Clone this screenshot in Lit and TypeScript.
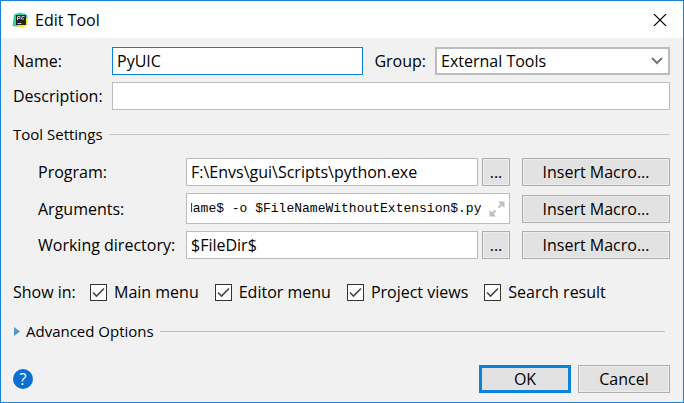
import { LitElement, html, css } from "lit";
import { customElement, query } from "lit/decorators.js";

interface SettingRow {
  id: string;
  label: string;
  value: string;
  browse: boolean;
}

const SETTINGS: SettingRow[] = [
  { id: "program", label: "Program:", value: "F:\\Envs\\gui\\Scripts\\python.exe", browse: true },
  { id: "arguments", label: "Arguments:", value: "$FileName$ -o $FileNameWithoutExtension$.py", browse: false },
  { id: "directory", label: "Working directory:", value: "$FileDir$", browse: true },
];

const PLACES = ["Main menu", "Editor menu", "Project views", "Search result"];

@customElement("app-root")
export class AppRoot extends LitElement {
  static styles = css`
    :host {
      display: block;
      min-height: 100vh;
      box-sizing: border-box;
      border: 1px solid #1883d7;
      background: #f1f1f1;
      color: #000;
      font: 16px/20px "Open Sans", "Noto Sans", sans-serif;
    }
    * { box-sizing: border-box; }
    input, select, button { font: inherit; color: inherit; margin: 0; border-radius: 0; }
    .titlebar {
      display: flex;
      align-items: center;
      height: 37px;
      padding: 0 14px 0 11px;
      background: #fff;
    }
    .logo { width: 18px; height: 18px; margin-right: 5px; }
    h1 { flex: 1; margin: 0; font: inherit; }
    .close { display: flex; padding: 2px; border: 0; background: none; }
    .body { padding: 9px 13px 8px 12px; }
    .row { display: flex; align-items: center; }
    .identity { display: grid; grid-template-columns: 99px 1fr; row-gap: 7px; align-items: center; }
    .field {
      width: 100%;
      min-width: 0;
      height: 28px;
      padding: 0 4px;
      border: 1px solid #bcbcbc;
      outline: 0;
      background: #fff;
    }
    .focused { flex: 1; border-color: #0a84d9; }
    .group-label { padding: 0 9px 0 11px; }
    .select { position: relative; flex: 0 0 235px; display: flex; }
    select {
      width: 100%;
      height: 28px;
      padding: 0 24px 0 4px;
      border: 2px solid #bcbcbc;
      outline: 0;
      appearance: none;
      background: #fff;
    }
    .chevron { position: absolute; right: 7px; top: 10px; pointer-events: none; }
    .section { display: flex; align-items: center; gap: 6px; margin-top: 14px; }
    .section h2 { margin: 0; font: inherit; font-size: 15px; }
    .rule { flex: 1; height: 1px; background: #c6c6c6; }
    .settings {
      display: grid;
      grid-template-columns: 148px 1fr 148px;
      row-gap: 7px;
      align-items: center;
      margin: 14px 0 0 25px;
    }
    .control { display: flex; gap: 4px; margin-right: 12px; min-width: 0; }
    .button {
      height: 28px;
      padding: 0;
      border: 1px solid #adadad;
      background: #e2e2e2;
      box-shadow: inset 0 0 0 1px #ececec;
      text-align: center;
    }
    .browse { flex: 0 0 28px; }
    .expandable {
      display: flex;
      align-items: center;
      flex: 1;
      min-width: 0;
      height: 31px;
      padding: 0 4px;
      border: 1px solid #bcbcbc;
      background: #fff;
    }
    .code {
      flex: 1;
      min-width: 0;
      height: 28px;
      padding: 0;
      border: 0;
      outline: 0;
      background: none;
      font: 13px "Liberation Mono", monospace;
    }
    .expand { display: flex; margin-left: 8px; padding: 0; border: 0; background: none; }
    .places { display: flex; align-items: center; margin-top: 23px; white-space: nowrap; }
    .places-label { width: 77px; }
    .place { display: flex; align-items: center; margin-right: 16px; }
    .tick {
      appearance: none;
      width: 17px;
      height: 17px;
      margin-right: 7px;
      border: 1px solid #333;
      background: #fff;
    }
    .box { position: relative; display: flex; }
    .check { position: absolute; pointer-events: none; }
    .advanced { display: flex; align-items: center; margin: 19px 5px 0 0; }
    .toggle { display: flex; align-items: center; gap: 6px; padding: 0; border: 0; background: none; font-size: 15px; }
    .advanced .rule { margin-left: 6px; background: #bbb; }
    .footer { display: flex; align-items: center; gap: 7px; margin-top: 24px; }
    .help {
      width: 20px;
      height: 20px;
      margin-right: auto;
      padding: 0;
      border: 0;
      border-radius: 50%;
      background: #0a6fd0;
      color: #fff;
    }
    .footer .button { width: 92px; }
    .footer .primary { border: 3px solid #0a84d9; box-shadow: none; }
  `;

  @query(".code") private code!: HTMLInputElement;

  firstUpdated() {
    this.code.scrollLeft = this.code.scrollWidth;
  }

  private renderControl(row: SettingRow) {
    if (row.browse) {
      return html`
        <input class="field" id=${row.id} .value=${row.value} />
        <button class="button browse" aria-label="Browse">...</button>`;
    }
    return html`
      <div class="expandable">
        <input class="code" id=${row.id} .value=${row.value} />
        <button class="expand" aria-label="Expand">
          <svg width="16" height="16" viewBox="0 0 16 16" fill="#b9bfc4" stroke="#b9bfc4" stroke-width="2">
            <path stroke="none" d="M9 0.5h6.5v6.500zM0.500 9v6.500h6.500z" />
            <path d="M13.500 2.500l-4 4M2.500 13.500l4-4" />
          </svg>
        </button>
      </div>`;
  }

  render() {
    return html`
      <header class="titlebar">
        <svg class="logo" viewBox="0 0 18 18" aria-hidden="true">
          <path fill="#2fd596" d="M2 3.500L8 1.500l4 1.500-2 12-5 .5-4.500-.5z" />
          <path fill="#2bc5dc" d="M11.500 2l3 1.500L16 7l-4 1z" />
          <path fill="#f3ea4e" d="M13.500 6l2.500 1v7l-5 3-6-1.500 1-2.500z" />
          <path fill="#242424" d="M4 4h10v10H4z" />
          <path stroke="#c8c8c8" fill="none" d="M5.500 9V5.500h2.500V7.500H6M12.500 5.500H10L9.500 8H12M5.500 12.500h4" />
        </svg>
        <h1>Edit Tool</h1>
        <button class="close" aria-label="Close">
          <svg width="14" height="12" viewBox="0 0 14 12" stroke="#000" stroke-width="1.1">
            <path d="M1 0l12 12M13 0L1 12" />
          </svg>
        </button>
      </header>
      <main class="body">
        <div class="identity">
          <label for="name">Name:</label>
          <div class="row">
            <input class="field focused" id="name" .value=${"PyUIC"} />
            <label class="group-label" for="group">Group:</label>
            <div class="select">
              <select id="group"><option>External Tools</option></select>
              <svg class="chevron" width="12" height="9" viewBox="0 0 12 9" fill="none" stroke="#777" stroke-width="2">
                <path d="M1 1l5 5 5-5" />
              </svg>
            </div>
          </div>
          <label for="description">Description:</label>
          <input class="field" id="description" />
        </div>
        <div class="section"><h2>Tool Settings</h2><span class="rule"></span></div>
        <div class="settings">
          ${SETTINGS.map(
            (row) => html`
              <label for=${row.id}>${row.label}</label>
              <div class="control">${this.renderControl(row)}</div>
              <button class="button">Insert Macro...</button>`
          )}
        </div>
        <div class="places">
          <span class="places-label">Show in:</span>
          ${PLACES.map(
            (place) => html`
              <label class="place">
                <span class="box">
                  <input class="tick" type="checkbox" checked />
                  <svg class="check" width="17" height="17" viewBox="0 0 17 17" fill="none" stroke="#444" stroke-width="1.6">
                    <path d="M3 8.500l3.500 3.500 7.500-7.500" />
                  </svg>
                </span>
                ${place}
              </label>`
          )}
        </div>
        <div class="advanced">
          <button class="toggle" aria-expanded="false">
            <svg width="7" height="9" viewBox="0 0 7 9" fill="#4a9cc7"><path d="M1 0l6 4.500L1 9z" /></svg>
            Advanced Options
          </button>
          <span class="rule"></span>
        </div>
        <footer class="footer">
          <button class="help" aria-label="Help">?</button>
          <button class="button primary">OK</button>
          <button class="button">Cancel</button>
        </footer>
      </main>
    `;
  }
}
